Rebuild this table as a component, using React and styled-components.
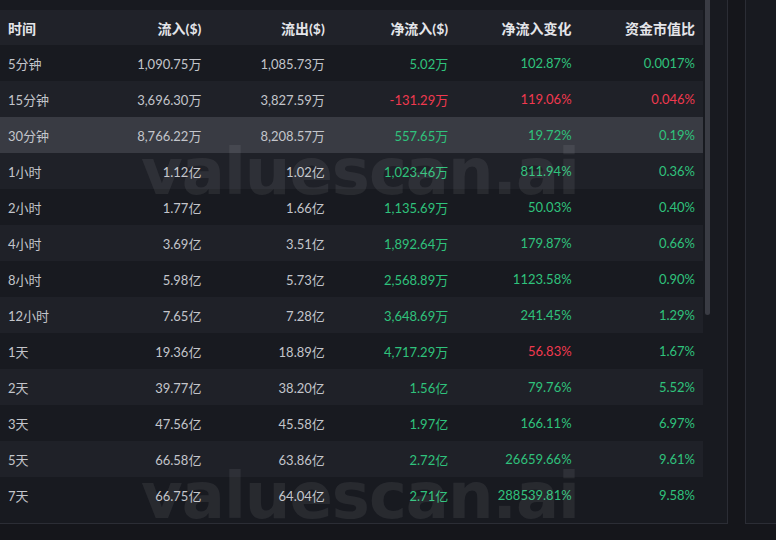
import styled, { createGlobalStyle } from "styled-components"

const GlobalStyle = createGlobalStyle`
        html, body {
                margin:0;
                background:#15161b;
                overflow:hidden;
        }
        body {
                font-family: Lato, "Noto Sans CJK SC", sans-serif;
        }
`

const Page = styled.div`
        display:flex;
        gap:17px;
        width:776px;
        height:540px;
        box-sizing:border-box;
`

const Panel = styled.section`
        position:relative;
        display:flex;
        width:728px;
        height:524px;
        box-sizing:border-box;
        background:#181a20;
        border-right:1px solid #2b2d35;
        border-bottom:1px solid #2b2d35;
        overflow:hidden;
`

const SidePanel = styled.section`
        flex:1;
        height:524px;
        box-sizing:border-box;
        background:#181a20;
        border-left:1px solid #2b2d35;
        border-bottom:1px solid #2b2d35;
`

const Table = styled.div`
        width:703px;
        padding-top:10px;
`

const Row = styled.div`
        display:grid;
        grid-template-columns:70px repeat(5, 1fr);
        align-items:center;
        padding:0 8px;
        height:${p => (p.$head ? "35px" : "36px")};
        background:${p => p.$bg};
        font-size:${p => (p.$head ? "14px" : "13px")};
        font-weight:${p => (p.$head ? 700 : 400)};
        color:${p => (p.$head ? "#e4e5e9" : "#c3c5cb")};
`

const Cell = styled.div`
        text-align:${p => (p.$left ? "left" : "right")};
        white-space:nowrap;
        color:${p => p.$tone === "up" ? "#2fc27c" : p.$tone === "down" ? "#f0394f" : "inherit"};
`

const Track = styled.div`
        width:7px;
        padding-left:2px;
`

const Thumb = styled.div`
        width:5px;
        height:315px;
        border-radius:0 0 3px 3px;
        background:#3a3c44;
`

const Watermark = styled.div`
        position:absolute;
        left:141px;
        top:0;
        pointer-events:none;
        display:flex;
        flex-direction:column;
`

const Mark = styled.span`
        margin-top:${p => p.$top}px;
        font-family:"DejaVu Sans", sans-serif;
        font-weight:700;
        font-size:64px;
        line-height:70px;
        letter-spacing:-1px;
        white-space:nowrap;
        color:rgba(255,255,255,0.07);
`

const heads = ["时间", "流入($)", "流出($)", "净流入($)", "净流入变化", "资金市值比"]

const rows = [
    ["5分钟", "1,090.75万", "1,085.73万", "5.02万", "102.87%", "0.0017%", "up", "up", "up"],
    ["15分钟", "3,696.30万", "3,827.59万", "-131.29万", "119.06%", "0.046%", "down", "down", "down"],
    ["30分钟", "8,766.22万", "8,208.57万", "557.65万", "19.72%", "0.19%", "up", "up", "up"],
    ["1小时", "1.12亿", "1.02亿", "1,023.46万", "811.94%", "0.36%", "up", "up", "up"],
    ["2小时", "1.77亿", "1.66亿", "1,135.69万", "50.03%", "0.40%", "up", "up", "up"],
    ["4小时", "3.69亿", "3.51亿", "1,892.64万", "179.87%", "0.66%", "up", "up", "up"],
    ["8小时", "5.98亿", "5.73亿", "2,568.89万", "1123.58%", "0.90%", "up", "up", "up"],
    ["12小时", "7.65亿", "7.28亿", "3,648.69万", "241.45%", "1.29%", "up", "up", "up"],
    ["1天", "19.36亿", "18.89亿", "4,717.29万", "56.83%", "1.67%", "up", "down", "up"],
    ["2天", "39.77亿", "38.20亿", "1.56亿", "79.76%", "5.52%", "up", "up", "up"],
    ["3天", "47.56亿", "45.58亿", "1.97亿", "166.11%", "6.97%", "up", "up", "up"],
    ["5天", "66.58亿", "63.86亿", "2.72亿", "26659.66%", "9.61%", "up", "up", "up"],
    ["7天", "66.75亿", "64.04亿", "2.71亿", "288539.81%", "9.58%", "up", "up", "up"],
]

const rowBg = i => (i === 2 ? "#393b43" : i % 2 ? "#1f2128" : "#181a20")

const App = () => {
    return (
        <>
            <GlobalStyle />
            <Page>
                <Panel>
                    <Table>
                        <Row $head $bg="#202229">
                            {heads.map((h, i) => (
                                <Cell key={h} $left={i === 0}>{h}</Cell>
                            ))}
                        </Row>
                        {rows.map((r, i) => (
                            <Row key={r[0]} $bg={rowBg(i)}>
                                <Cell $left>{r[0]}</Cell>
                                <Cell>{r[1]}</Cell>
                                <Cell>{r[2]}</Cell>
                                <Cell $tone={r[6]}>{r[3]}</Cell>
                                <Cell $tone={r[7]}>{r[4]}</Cell>
                                <Cell $tone={r[8]}>{r[5]}</Cell>
                            </Row>
                        ))}
                    </Table>
                    <Track>
                        <Thumb />
                    </Track>
                    <Watermark>
                        <Mark $top={137}>valuescan.ai</Mark>
                        <Mark $top={254}>valuescan.ai</Mark>
                    </Watermark>
                </Panel>
                <SidePanel />
            </Page>
        </>
    )
}

export default App
